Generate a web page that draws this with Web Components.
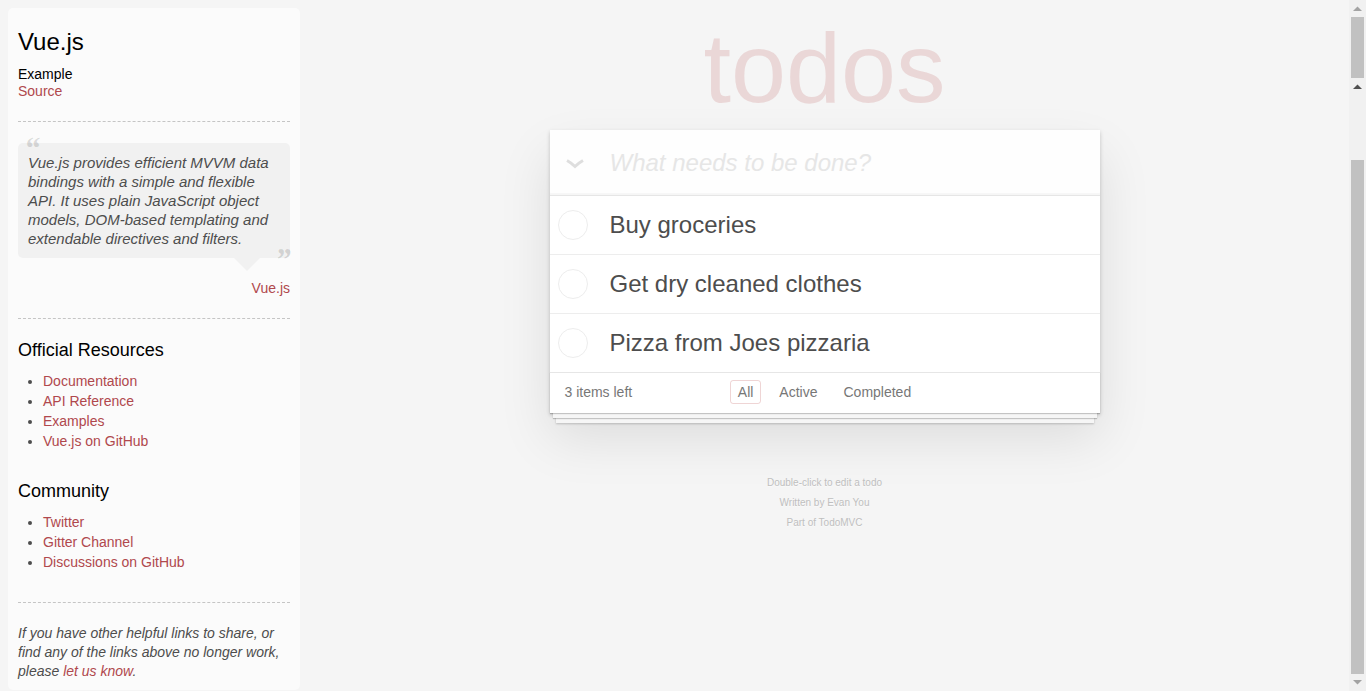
<!DOCTYPE html>
<html lang="en">
<head>
<meta charset="utf-8">
<title>Vue.js • TodoMVC</title>
<style>
  body { margin: 0; background: #f5f5f5; color: #4d4d4d; font: 14px/20px "Liberation Sans", Arial, sans-serif; }
</style>
</head>
<body>
<todo-page></todo-page>

<script>
function define(name, html) {
  const template = document.createElement('template');
  template.innerHTML = html;
  customElements.define(name, class extends HTMLElement {
    constructor() {
      super();
      this.attachShadow({ mode: 'open' }).append(template.content.cloneNode(true));
    }
  });
}

// Sidebar link
define('learn-link', `
  <style>
    :host { display: inline; }
    a { color: #b0484d; text-decoration: none; }
    a:hover { text-decoration: underline; }
  </style>
  <a href="#"><slot></slot></a>`);

// Pull quote shown as a speech bubble
define('learn-quote', `
  <style>
    :host { display: block; }
    blockquote { margin: 0; padding: 10px; position: relative; font-size: 15px; line-height: 19px; font-style: italic; background: #f1f1f1; border-radius: 5px; }
    p { margin: 0; }
    blockquote::before, blockquote::after { position: absolute; font: italic bold 32px/50px "Liberation Serif", Georgia, serif; color: rgba(0, 0, 0, .13); }
    blockquote::before { content: "\\201C"; top: -20px; left: 6px; }
    blockquote::after { content: "\\201D"; bottom: -26px; right: -1px; }
    i { position: absolute; right: 30px; bottom: -13px; border: 13px solid transparent; border-top-color: #f1f1f1; border-bottom: 0; }
    footer { margin-top: 20px; text-align: right; }
  </style>
  <blockquote><p><slot></slot></p><i></i></blockquote>
  <footer><slot name="by"></slot></footer>`);

// Titled group of links
define('learn-section', `
  <style>
    :host { display: block; margin-bottom: 29px; }
    h4 { margin: 0 0 10px; font-size: 18px; line-height: 22px; font-weight: 400; color: #000; }
    ul { margin: 0 0 0 25px; padding: 0; }
  </style>
  <h4><slot name="title"></slot></h4>
  <ul><slot></slot></ul>`);

define('learn-item', `
  <style>:host { display: list-item; list-style: disc; }</style>
  <slot></slot>`);

define('learn-bar', `
  <style>
    :host { display: block; margin: 8px 0 0 8px; padding: 19px 10px 9px; background: rgba(255, 255, 255, .6); border-radius: 5px; box-sizing: border-box; align-self: start; }
    h3 { margin: 0 0 10px; font-size: 24px; line-height: 29px; font-weight: 400; color: #000; }
    h5 { margin: 0; font-size: 14px; line-height: 17px; font-weight: 400; color: #000; }
    .source { line-height: 17px; }
    hr { margin: 21px 0; border: 0; border-top: 1px dashed #c5c5c5; }
    learn-quote + hr { margin: 20px 0; }
    learn-section + hr { margin-top: 30px; }
    .more { margin: 0; font-style: italic; line-height: 19px; }
  </style>
  <header>
    <h3>Vue.js</h3>
    <h5>Example</h5>
    <div class="source"><learn-link>Source</learn-link></div>
  </header>
  <hr>
  <learn-quote>Vue.js provides efficient MVVM data bindings with a simple and flexible API. It uses plain JavaScript object models, DOM-based templating and extendable directives and filters.<learn-link slot="by">Vue.js</learn-link></learn-quote>
  <hr>
  <learn-section>
    <span slot="title">Official Resources</span>
    <learn-item><learn-link>Documentation</learn-link></learn-item>
    <learn-item><learn-link>API Reference</learn-link></learn-item>
    <learn-item><learn-link>Examples</learn-link></learn-item>
    <learn-item><learn-link>Vue.js on GitHub</learn-link></learn-item>
  </learn-section>
  <learn-section>
    <span slot="title">Community</span>
    <learn-item><learn-link>Twitter</learn-link></learn-item>
    <learn-item><learn-link>Gitter Channel</learn-link></learn-item>
    <learn-item><learn-link>Discussions on GitHub</learn-link></learn-item>
  </learn-section>
  <hr>
  <p class="more">If you have other helpful links to share, or find any of the links above no longer work, please <learn-link>let us know</learn-link>.</p>`);

define('todo-input', `
  <style>
    :host { display: flex; align-items: center; height: 65px; background: rgba(0, 0, 0, .003); box-shadow: inset 0 -2px 1px rgba(0, 0, 0, .03); }
    label { display: flex; justify-content: center; width: 50px; }
    input[type=checkbox] { appearance: none; position: absolute; margin: 0; }
    svg { display: block; margin-top: 3px; }
    input[type=text] { flex: 1; min-width: 0; margin: 0; padding: 0 16px 0 10px; border: 0; outline: 0; background: none; color: inherit; font: 24px/34px "Liberation Sans", Arial, sans-serif; }
    ::placeholder { color: #e6e6e6; opacity: 1; font-style: italic; }
  </style>
  <label><input type="checkbox" aria-label="Mark all as complete">
    <svg width="18" height="10" viewBox="0 0 18 10" fill="none" stroke="#dedede" stroke-width="3"><path d="M1 1.5Q5.500 4 9 7.500Q12.500 4 17 1.500"/></svg>
  </label>
  <input type="text" aria-label="New todo" placeholder="What needs to be done?">`);

define('todo-item', `
  <style>
    :host { display: block; border-bottom: 1px solid #ededed; }
    :host(:last-of-type) { border-bottom: 0; }
    label { display: flex; align-items: center; gap: 22px; padding: 14px 15px 14px 8px; font-size: 24px; line-height: 30px; }
    input { appearance: none; flex: none; width: 30px; height: 30px; margin: 0; border: 1px solid #ededed; border-radius: 50%; }
    input:checked { border-color: #bddad5; }
  </style>
  <label><input type="checkbox"><span><slot></slot></span></label>`);

define('todo-filter', `
  <style>
    :host { display: block; }
    a { display: block; padding: 2px 7px; border: 1px solid transparent; border-radius: 3px; line-height: 18px; color: inherit; text-decoration: none; }
    :host([selected]) a { border-color: rgba(175, 47, 47, .2); }
  </style>
  <a href="#"><slot></slot></a>`);

define('todo-footer', `
  <style>
    :host { display: grid; grid-template-columns: 1fr auto 1fr; align-items: center; padding: 7px 15px 9px; border-top: 1px solid #e6e6e6; color: #777;
      box-shadow: 0 1px 1px rgba(0,0,0,.2), 0 8px 0 -3px #f6f6f6, 0 9px 1px -3px rgba(0,0,0,.2), 0 16px 0 -6px #f6f6f6, 0 17px 2px -6px rgba(0,0,0,.2); }
    nav { display: flex; gap: 10px; }
  </style>
  <span>3 items left</span>
  <nav>
    <todo-filter selected>All</todo-filter>
    <todo-filter>Active</todo-filter>
    <todo-filter>Completed</todo-filter>
  </nav>`);

define('todo-app', `
  <style>
    :host { display: block; width: 100%; max-width: 550px; margin: 0 auto; }
    h1 { margin: 0; padding: 11px 0 5px; font-size: 99px; line-height: 114px; font-weight: 400; text-align: center; color: rgba(175, 47, 47, .15); }
    .card { background: #fff; box-shadow: 0 2px 4px rgba(0,0,0,.2), 0 25px 50px rgba(0,0,0,.1); }
    main { border-top: 1px solid #e6e6e6; }
    footer { margin-top: 60px; font-size: 10px; text-align: center; color: #bfbfbf; text-shadow: 0 1px 0 rgba(255,255,255,.5); }
    p { margin: 0; }
    a { color: inherit; text-decoration: none; }
  </style>
  <h1>todos</h1>
  <div class="card">
    <todo-input></todo-input>
    <main>
      <todo-item>Buy groceries</todo-item>
      <todo-item>Get dry cleaned clothes</todo-item>
      <todo-item>Pizza from Joes pizzaria</todo-item>
    </main>
    <todo-footer></todo-footer>
  </div>
  <footer>
    <p>Double-click to edit a todo</p>
    <p>Written by <a href="#">Evan You</a></p>
    <p>Part of <a href="#">TodoMVC</a></p>
  </footer>`);

// Right-hand strip: a short scroll bar stacked on the page's own
define('scroll-strip', `
  <style>
    :host { display: flex; flex-direction: column; background: #f1f1f1; }
    svg { display: block; flex: none; width: 17px; height: 17px; fill: #a3a3a3; }
    .dark { fill: #505050; }
    .thumb { margin: 0 2px; background: #c1c1c1; }
    .short { height: 61px; }
    .long { flex: 1; margin-top: 65px; }
  </style>
  <svg viewBox="0 0 17 17"><path d="M4 11L8.500 6.500L13 11Z"/></svg>
  <div class="thumb short"></div>
  <svg class="dark" viewBox="0 0 17 17"><path d="M4 11L8.500 6.500L13 11Z"/></svg>
  <div class="thumb long"></div>
  <svg viewBox="0 0 17 17"><path d="M4 6L8.500 10.500L13 6Z"/></svg>`);

define('todo-page', `
  <style>:host { display: grid; grid-template-columns: 300px 1fr 17px; min-height: 100vh; }</style>
  <learn-bar></learn-bar>
  <todo-app></todo-app>
  <scroll-strip></scroll-strip>`);
</script>
</body>
</html>
